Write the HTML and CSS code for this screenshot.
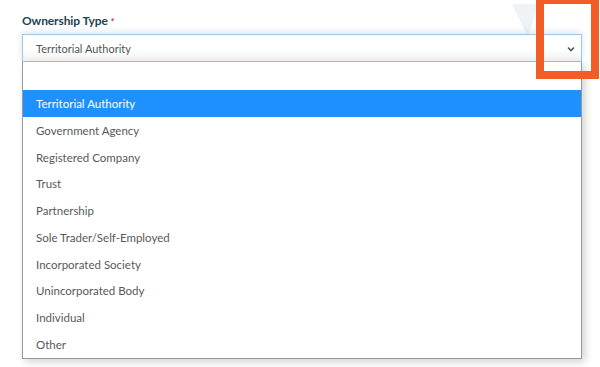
FILE: index.html
```html
<!DOCTYPE html>
<html lang="en">
<head>
    <meta charset="UTF-8">
    <meta name="viewport" content="width=device-width, initial-scale=1.0">
    <title>Ownership Type</title>
    <link rel="stylesheet" href="styles.css">
</head>
<body>
<div class="page">
    <svg class="watermark" width="26" height="34" viewBox="0 0 26 34"><polygon points="0,0 26,0 16,34" fill="#eef3f6"/></svg>

    <div class="field">
        <label class="label">Ownership Type <span class="req">*</span></label>
        <div class="select">
            <span class="value">Territorial Authority</span>
            <svg class="chevron" width="8" height="6" viewBox="0 0 8 6"><path d="M1 1.5 L4 4.5 L7 1.5" fill="none" stroke="#555" stroke-width="1.6"/></svg>
        </div>
        <ul class="options">
            <li class="opt empty"></li>
            <li class="opt active">Territorial Authority</li>
            <li class="opt">Government Agency</li>
            <li class="opt">Registered Company</li>
            <li class="opt">Trust</li>
            <li class="opt">Partnership</li>
            <li class="opt">Sole Trader/Self-Employed</li>
            <li class="opt">Incorporated Society</li>
            <li class="opt">Unincorporated Body</li>
            <li class="opt">Individual</li>
            <li class="opt">Other</li>
        </ul>
    </div>

    <div class="callout"></div>
</div>
</body>
</html>
```

FILE: styles.css
```css
body { margin: 0; padding: 0; background: #fff; font-family: Lato, 'Open Sans', sans-serif; }
.page { position: relative; width: 600px; height: 367px; overflow: hidden; }
.watermark { position: absolute; left: 512px; top: 4px; }
.field { position: relative; padding: 13px 0 0 22px; width: 560px; }
.label { display: block; font-size: 12px; font-weight: bold; color: #1d4356; height: 21px; letter-spacing: -0.1px; }
.req { color: #d9363e; font-size: 10px; }
.select { display: flex; align-items: center; justify-content: space-between; height: 26px; padding: 0 6px 0 13px; border: 1px solid #a7c4df; background: linear-gradient(#fff 55%, #f1f1f1); box-shadow: 0 -2px 7px rgba(150, 185, 215, 0.35); }
.value { font-size: 11px; color: #555; }
.chevron { margin-top: 1px; }
.options { list-style: none; margin: 0; padding: 0; border: 1px solid #9a9a9a; border-top: none; background: #fff; box-shadow: 3px 3px 8px rgba(0, 0, 0, 0.18); }
.opt { box-sizing: border-box; height: 26.75px; line-height: 26.75px; padding: 1px 0 0 13px; font-size: 11.5px; color: #595959; }
.opt.empty { height: 28px; }
.opt.active { background: #1e90ff; color: #fff; }
.callout { position: absolute; left: 536px; top: -4px; width: 47px; height: 67px; border: 8px solid #f25c25; }
```
